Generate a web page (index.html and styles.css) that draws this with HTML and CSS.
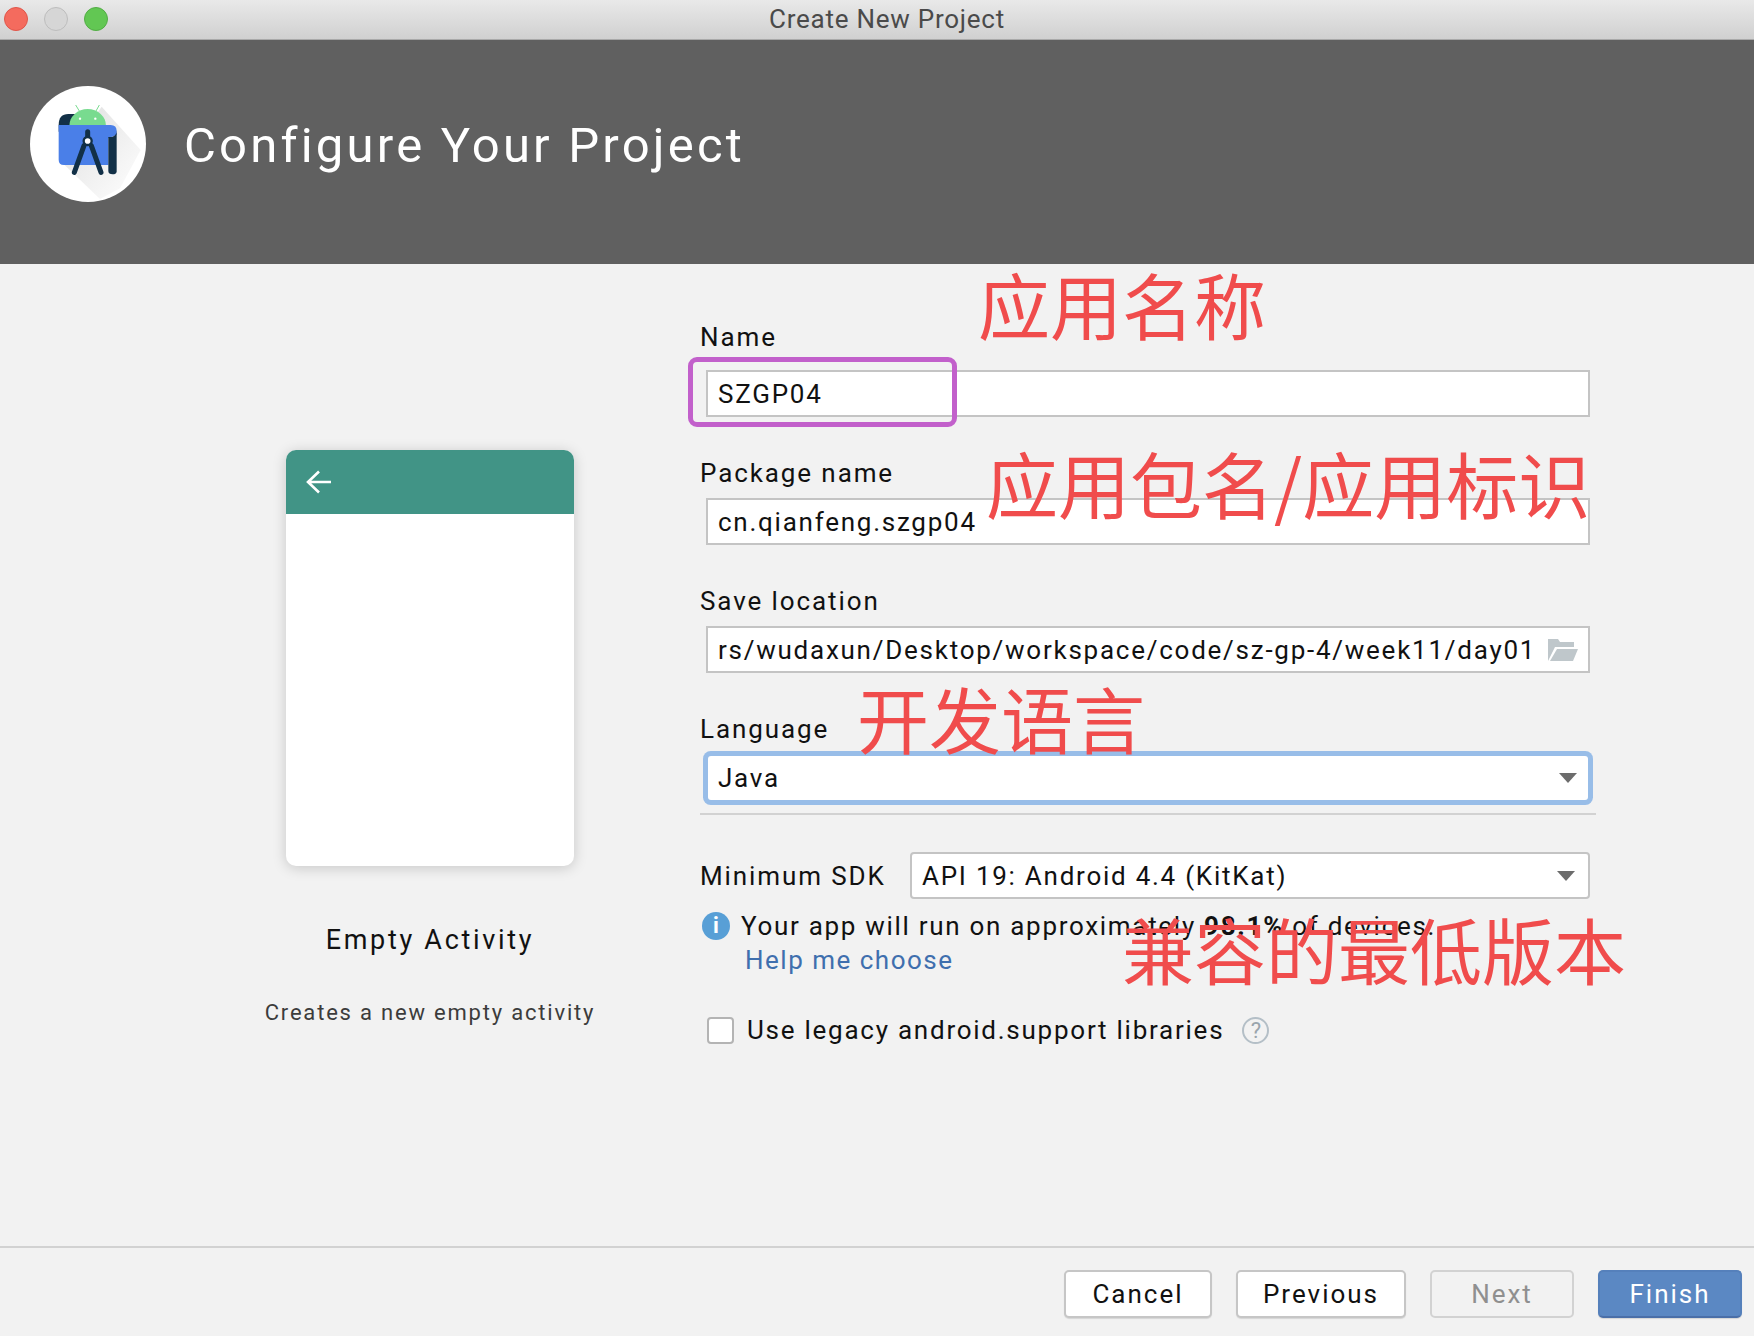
FILE: index.html
```html
<!DOCTYPE html>
<html lang="en">
<head>
    <meta charset="UTF-8">
    <meta name="viewport" content="width=device-width, initial-scale=1.0">
    <title>Create New Project</title>
    <link rel="stylesheet" href="styles.css">
</head>
<body>

    <div class="window">
        <div class="titlebar">
            <div class="lights">
                <span class="light light-red"></span>
                <span class="light light-gray"></span>
                <span class="light light-green"></span>
            </div>
            <div class="title">Create New Project</div>
        </div>

        <div class="header">
            <svg class="logo" viewBox="30 33 348 348">
                <defs>
                    <linearGradient id="logoShade" x1="0" y1="0" x2="1" y2="1">
                        <stop offset="0" stop-color="#dedede"/>
                        <stop offset="1" stop-color="#ffffff"/>
                    </linearGradient>
                </defs>
                <circle cx="204" cy="207" r="174" fill="#ffffff"/>
                <path d="M245 95 L362 225 L300 340 L240 372 L125 262 Z" fill="url(#logoShade)"/>
                <path d="M116 150 Q116 117 145 117 L190 117 L190 170 L116 170 Z" fill="#123047"/>
                <path d="M148 152 A55 50 0 0 1 258 152 Z" fill="#78db8f"/>
                <path d="M178 108 L167 90 M228 108 L238 90" stroke="#78db8f" stroke-width="3"/>
                <circle cx="180" cy="131" r="3.5" fill="#ffffff"/>
                <circle cx="226" cy="131" r="3.5" fill="#ffffff"/>
                <path d="M116 150 L272 150 Q290 150 290 168 L290 180 L265 190 L265 270 L132 270 Q116 270 116 254 Z" fill="#4a7fe8"/>
                <path d="M265 186 L276 186 Q290 182 290 165 L290 290 Q288 298 278 298 Q265 298 265 288 Z" fill="#123047"/>
                <path d="M203 170 L203 186 M192 212 L163 292 M214 212 L243 292" stroke="#123047" stroke-width="15" stroke-linecap="round" fill="none"/>
                <circle cx="203" cy="198" r="12" fill="#ffffff" stroke="#123047" stroke-width="7"/>
            </svg>
            <h1 class="header-title">Configure Your Project</h1>
        </div>

        <div class="main">
            <div class="preview">
                <div class="phone">
                    <div class="phone-bar">
                        <svg class="back-arrow" viewBox="0 0 26 24">
                            <path d="M25 12 L2 12 M13 1.500 L2 12 L13 22.500" stroke="#ffffff" stroke-width="2.600" fill="none"/>
                        </svg>
                    </div>
                </div>
                <div class="preview-name">Empty Activity</div>
                <div class="preview-desc">Creates a new empty activity</div>
            </div>

            <div class="form">
                <label class="label label-name">Name</label>
                <div class="input">SZGP04</div>

                <label class="label">Package name</label>
                <div class="input">cn.qianfeng.szgp04</div>

                <label class="label">Save location</label>
                <div class="input input-path">
                    <span>rs/wudaxun/Desktop/workspace/code/sz-gp-4/week11/day01</span>
                    <svg class="folder" viewBox="0 0 30 22">
                        <path d="M0 0 L10 0 L12 3 L26 3 L26 8 L7 8 L0 22 Z" fill="#bfc7cb"/>
                        <path d="M9 10 L30 10 L25 22 L2 22 Z" fill="#bfc7cb"/>
                    </svg>
                </div>

                <label class="label">Language</label>
                <div class="select select-focus">
                    <span>Java</span>
                    <span class="caret"></span>
                </div>
                <div class="divider"></div>

                <div class="sdk-row">
                    <label class="sdk-label">Minimum SDK</label>
                    <div class="select select-sdk">
                        <span>API 19: Android 4.4 (KitKat)</span>
                        <span class="caret"></span>
                    </div>
                </div>

                <div class="info-row">
                    <span class="info-icon">i</span>
                    <span>Your app will run on approximately <b>98.1%</b> of devices.</span>
                </div>
                <a class="help-link">Help me choose</a>

                <div class="check-row">
                    <span class="checkbox"></span>
                    <span>Use legacy android.support libraries</span>
                    <span class="help-icon">?</span>
                </div>
            </div>
        </div>

        <div class="footer">
            <button class="btn btn-cancel">Cancel</button>
            <button class="btn btn-previous">Previous</button>
            <button class="btn btn-next">Next</button>
            <button class="btn btn-finish">Finish</button>
        </div>

        <!-- hand drawn notes on top of the screenshot -->
        <div class="mark-box"></div>
        <div class="note note-name">应用名称</div>
        <div class="note note-package">应用包名/应用标识</div>
        <div class="note note-language">开发语言</div>
        <div class="note note-sdk">兼容的最低版本</div>
    </div>

</body>
</html>
```

FILE: styles.css
```css
* {
    box-sizing: border-box;
}

body {
    margin: 0;
    font-family: Roboto, "Liberation Sans", sans-serif;
    background: #f2f2f2;
    color: #111111;
}

.window {
    position: relative;
    display: flex;
    flex-direction: column;
    width: 1754px;
    height: 1336px;
    overflow: hidden;
}

.titlebar {
    display: flex;
    align-items: center;
    height: 40px;
    padding: 0 88px 2px 4px;
    background: linear-gradient(#e9e9e9, #d0d0d0);
    border-bottom: 1px solid #a9a9a9;
}

.lights {
    display: flex;
    gap: 16px;
}

.light {
    width: 24px;
    height: 24px;
    border-radius: 50%;
}

.light-red {
    background: #f46b5e;
    border: 1px solid #e0564a;
}

.light-gray {
    background: #d6d6d6;
    border: 1px solid #bdbdbd;
}

.light-green {
    background: #62c753;
    border: 1px solid #52ad45;
}

.title {
    flex: 1;
    text-align: center;
    font-size: 26px;
    letter-spacing: 0.75px;
    color: #4a4a4a;
}

.header {
    display: flex;
    align-items: center;
    height: 224px;
    padding: 0 0 17px 30px;
    background: #606060;
}

.logo {
    width: 116px;
    height: 116px;
}

.header-title {
    margin: 3px 0 0 38px;
    font-size: 49px;
    font-weight: 400;
    letter-spacing: 3.2px;
    color: #ffffff;
}

.main {
    flex: 1;
    display: flex;
}

.preview {
    display: flex;
    flex-direction: column;
    align-items: center;
    width: 400px;
    margin-left: 230px;
    padding-top: 186px;
}

.phone {
    width: 288px;
    height: 416px;
    background: #ffffff;
    border-radius: 10px;
    overflow: hidden;
    box-shadow: 0 2px 14px rgba(0, 0, 0, 0.18);
}

.phone-bar {
    display: flex;
    align-items: center;
    height: 64px;
    padding-left: 20px;
    background: #419486;
}

.back-arrow {
    width: 26px;
    height: 24px;
}

.preview-name {
    margin-top: 58px;
    font-size: 27px;
    letter-spacing: 2.7px;
    color: #111111;
}

.preview-desc {
    margin-top: 44px;
    font-size: 22px;
    letter-spacing: 1.8px;
    color: #3c3c3c;
}

.form {
    width: 896px;
    margin-left: 70px;
    padding-top: 58px;
}

.label {
    display: block;
    height: 30px;
    margin: 41px 0 10px;
    font-size: 26px;
    line-height: 30px;
    letter-spacing: 1.9px;
}

.label-name {
    margin: 0 0 18px;
}

.input,
.select {
    display: flex;
    align-items: center;
    justify-content: space-between;
    font-size: 26px;
    letter-spacing: 1.75px;
    background: #ffffff;
}

.input {
    width: 884px;
    height: 47px;
    margin-left: 6px;
    padding: 0 10px;
    border: 2px solid #c4c4c4;
}

.folder {
    width: 30px;
    height: 22px;
}

.select {
    height: 47px;
    padding: 0 11px 0 10px;
    border-radius: 4px;
}

.select-focus {
    width: 880px;
    height: 44px;
    margin: 12px 0 0 8px;
    border-radius: 3px;
    box-shadow: 0 0 0 5px #98bde8;
}

.select-sdk {
    flex: 1;
    padding: 0 13px 0 10px;
    border: 2px solid #c4c4c4;
}

.caret {
    width: 0;
    height: 0;
    border-left: 9px solid transparent;
    border-right: 9px solid transparent;
    border-top: 10px solid #6c6c6c;
}

.divider {
    height: 2px;
    margin-top: 13px;
    background: #d2d2d2;
}

.sdk-row {
    display: flex;
    align-items: center;
    width: 890px;
    margin-top: 37px;
}

.sdk-label {
    width: 210px;
    font-size: 26px;
    letter-spacing: 1.9px;
}

.info-row {
    display: flex;
    align-items: center;
    gap: 11px;
    margin: 12px 0 0 2px;
    font-size: 26px;
    letter-spacing: 1.7px;
}

.info-icon {
    width: 28px;
    height: 28px;
    flex-shrink: 0;
    border-radius: 50%;
    background: #589fd6;
    color: #ffffff;
    font-size: 22px;
    font-weight: 700;
    line-height: 28px;
    text-align: center;
    letter-spacing: 0;
}

.help-link {
    display: block;
    margin: 4px 0 0 45px;
    font-size: 26px;
    letter-spacing: 1.5px;
    color: #3f6fae;
}

.check-row {
    display: flex;
    align-items: center;
    margin: 40px 0 0 7px;
    font-size: 26px;
    letter-spacing: 1.75px;
}

.checkbox {
    width: 27px;
    height: 27px;
    margin-right: 13px;
    background: #ffffff;
    border: 2px solid #b4b4b4;
    border-radius: 4px;
}

.help-icon {
    width: 27px;
    height: 27px;
    margin-left: 18px;
    border: 2px solid #b4bfc7;
    border-radius: 50%;
    color: #9aa5ad;
    font-size: 22px;
    line-height: 23px;
    text-align: center;
    letter-spacing: 0;
}

.footer {
    display: flex;
    justify-content: flex-end;
    gap: 24px;
    height: 90px;
    padding: 22px 12px 0 0;
    border-top: 2px solid #d2d2d2;
}

.btn {
    height: 48px;
    font-family: inherit;
    font-size: 26px;
    letter-spacing: 2px;
    color: #111111;
    background: #ffffff;
    border: 2px solid #c6c6c6;
    border-radius: 5px;
    box-shadow: 0 1px 1px rgba(0, 0, 0, 0.12);
}

.btn-cancel {
    width: 148px;
}

.btn-previous {
    width: 170px;
}

.btn-next {
    width: 144px;
    color: #8f8f8f;
    background: #f2f2f2;
    border-color: #d2d2d2;
    box-shadow: none;
}

.btn-finish {
    width: 144px;
    color: #ffffff;
    background: #5b88c3;
    border-color: #5580bb;
    border-bottom-color: #4a6fa8;
}

/* annotations */
.mark-box {
    position: absolute;
    left: 688px;
    top: 357px;
    width: 269px;
    height: 70px;
    border: 5px solid #c260cb;
    border-radius: 9px;
}

.note {
    position: absolute;
    font-family: "Noto Sans CJK SC", sans-serif;
    font-size: 72px;
    line-height: 72px;
    color: #f04c4c;
    white-space: nowrap;
}

.note-name {
    left: 978px;
    top: 267px;
}

.note-package {
    left: 986px;
    top: 446px;
}

.note-language {
    left: 857px;
    top: 681px;
}

.note-sdk {
    left: 1122px;
    top: 912px;
}
```
